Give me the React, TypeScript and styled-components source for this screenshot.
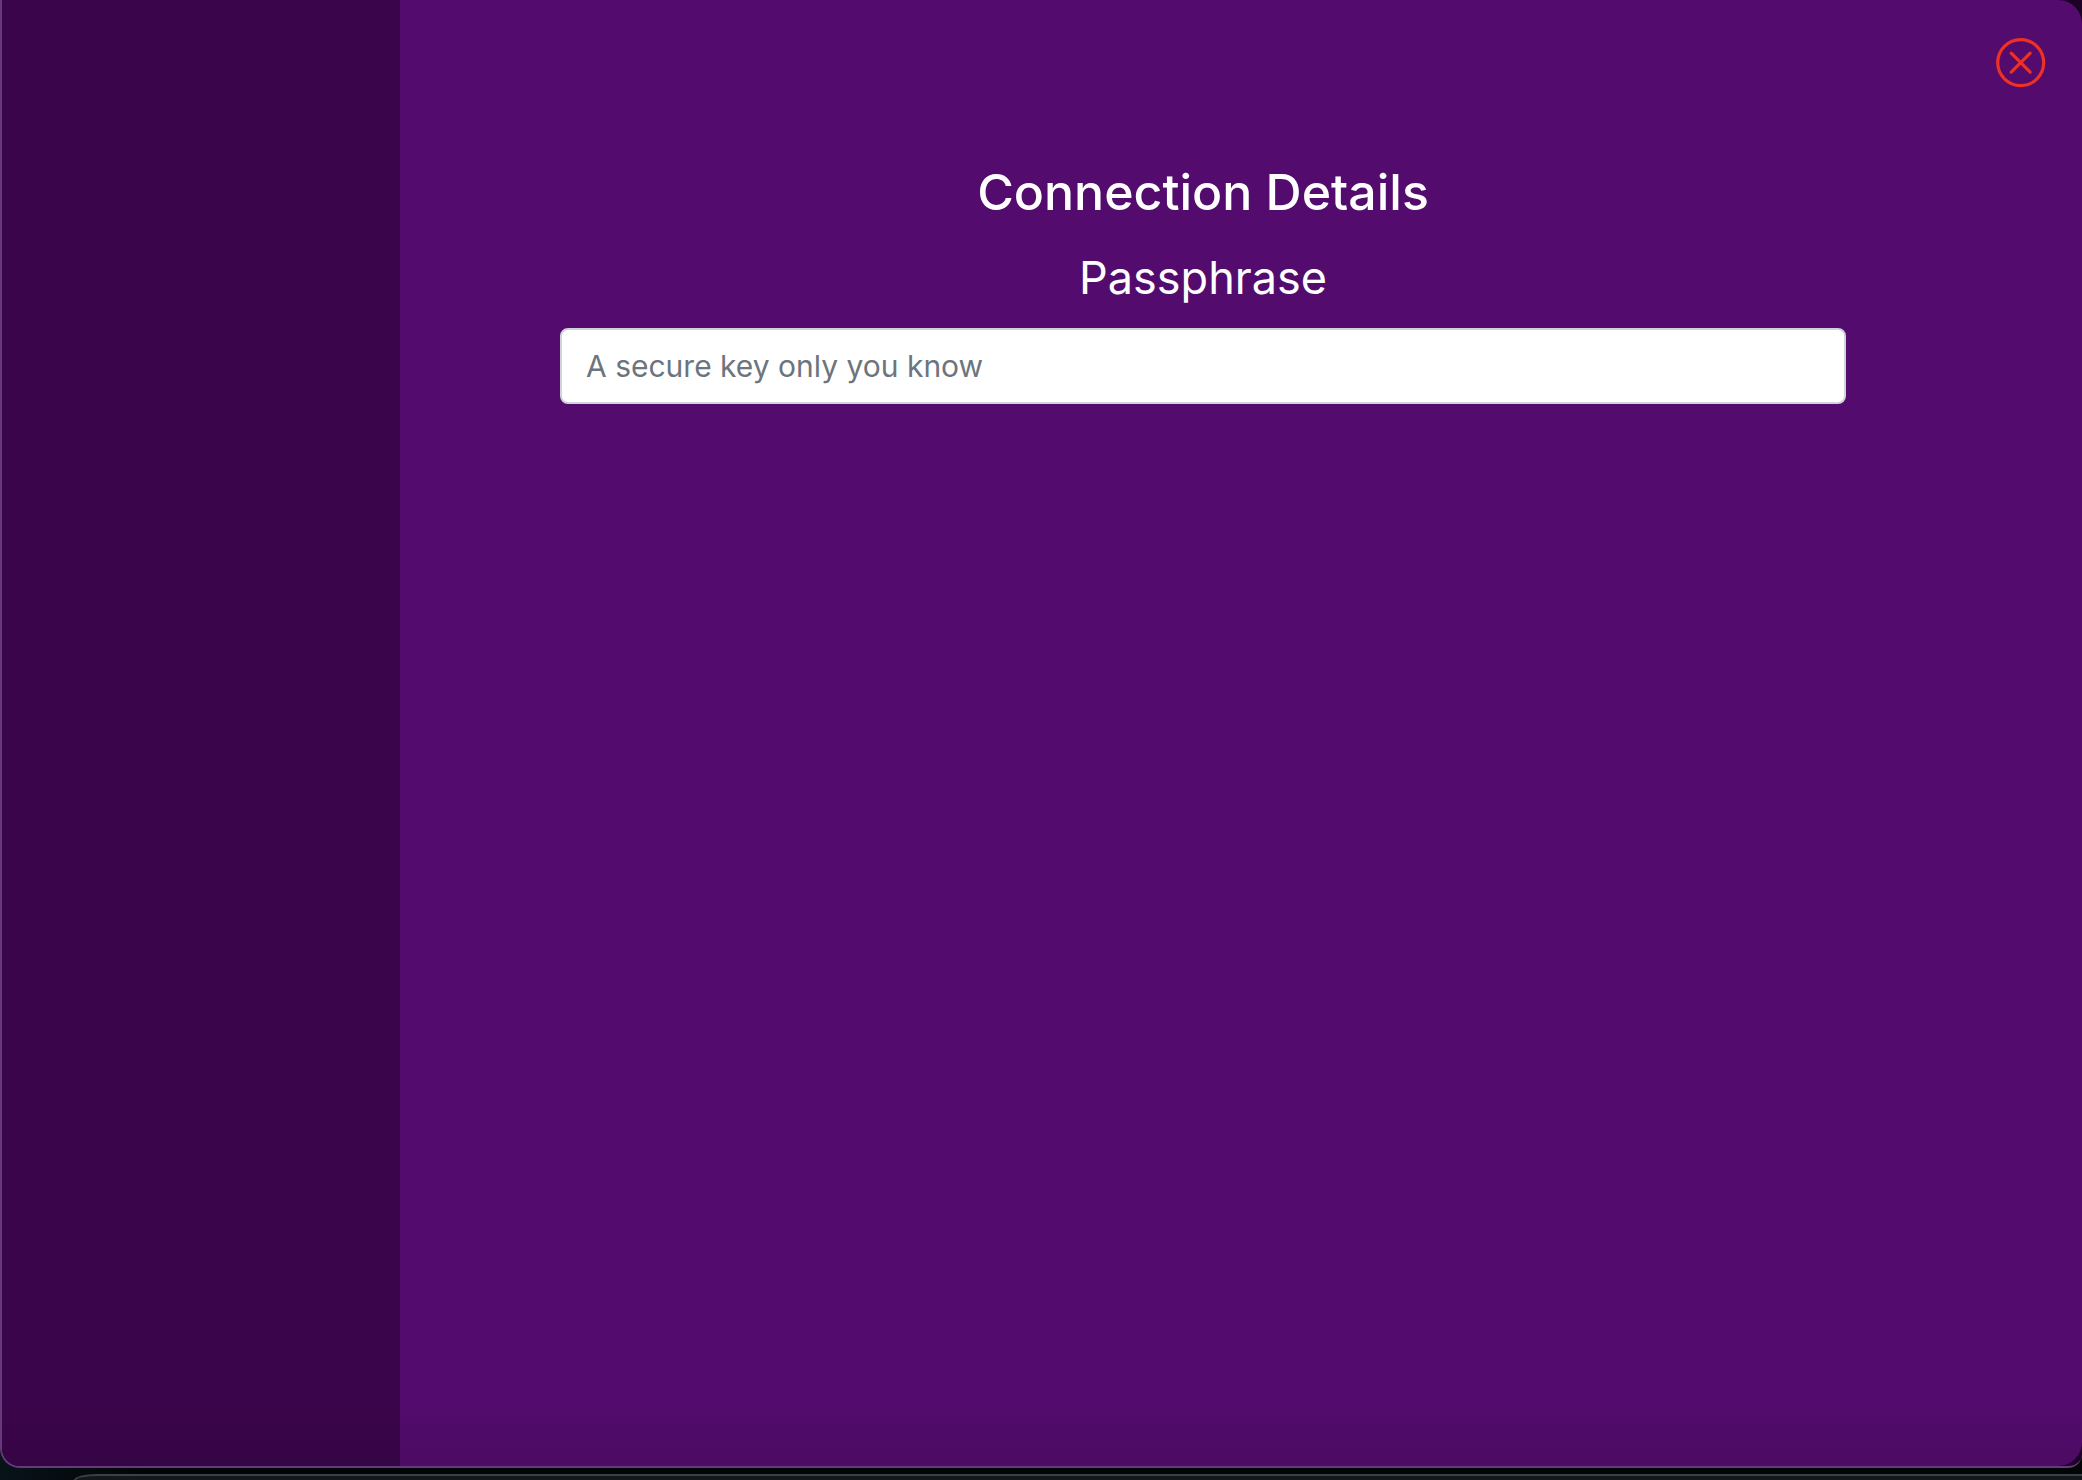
import React, { useState } from 'react';
import styled, { createGlobalStyle } from 'styled-components';

const GlobalStyle = createGlobalStyle`
  *, *::before, *::after {
    box-sizing: border-box;
  }
  body {
    margin: 0;
    background: #020506;
    font-family: Inter, 'Liberation Sans', sans-serif;
  }
`;

const Desktop = styled.div`
  display: flex;
  flex-direction: column;
  gap: 6px;
  min-height: 100vh;
  overflow: hidden;
  background: linear-gradient(90deg, #08131a 0, #020506 140px);
`;

const AppWindow = styled.div`
  display: flex;
  flex: 1;
  overflow: hidden;
  border: solid #66397a;
  border-width: 0 0 2px 2px;
  border-radius: 0 0 14px 20px;
  background: #1d0028;
`;

const Sidebar = styled.aside`
  flex: 0 0 398px;
  background: linear-gradient(#3b054b calc(100% - 60px), #360545);
`;

const Panel = styled.main`
  display: grid;
  flex: 1;
  grid-template-columns: 1fr 76px;
  align-items: start;
  padding: 38px 36px 0 160px;
  border-radius: 0 24px 24px 0;
  background: linear-gradient(#530c6d calc(100% - 60px), #4c0b64);
`;

const Form = styled.form`
  display: flex;
  flex-direction: column;
  align-items: center;
  margin-right: 124px;
  padding-top: 124px;
  color: #fff;
`;

const Title = styled.h1`
  margin: 0 0 20px;
  font-size: 50px;
  font-weight: 500;
  line-height: 60px;
`;

const Label = styled.label`
  margin-bottom: 14px;
  font-size: 45px;
  line-height: 72px;
`;

const TextField = styled.input`
  width: 100%;
  height: 76px;
  padding: 0 24px;
  border: 2px solid #ced4da;
  border-radius: 8px;
  background: #fff;
  color: #212529;
  font-family: inherit;
  font-size: 30px;

  &::placeholder {
    color: #6c757d;
    opacity: 1;
  }
`;

const CloseButton = styled.button`
  display: flex;
  justify-self: end;
  padding: 0;
  border: 0;
  background: none;
  color: #ee3124;
  cursor: pointer;
`;

const NextWindow = styled.div`
  height: 6px;
  margin-left: 74px;
  border-top: 2px solid #3b4144;
  border-left: 2px solid #3b4144;
  border-top-left-radius: 24px 6px;
  background: #12181b;
`;

export default function App() {
  const [passphrase, setPassphrase] = useState('');

  return (
    <>
      <GlobalStyle />
      <Desktop>
        <AppWindow>
          <Sidebar />
          <Panel>
            <Form>
              <Title>Connection Details</Title>
              <Label htmlFor="passphrase">Passphrase</Label>
              <TextField
                id="passphrase"
                type="text"
                placeholder="A secure key only you know"
                value={passphrase}
                onChange={(event) => setPassphrase(event.target.value)}
              />
            </Form>
            <CloseButton type="button" aria-label="Close">
              <svg width="50" height="50" viewBox="0 0 50 50" fill="none" stroke="currentColor" strokeWidth="3.2" strokeLinecap="round">
                <circle cx="24.7" cy="24.6" r="23" />
                <path d="M15.2 15.1l19 19M34.2 15.1l-19 19" />
              </svg>
            </CloseButton>
          </Panel>
        </AppWindow>
        <NextWindow />
      </Desktop>
    </>
  );
}
